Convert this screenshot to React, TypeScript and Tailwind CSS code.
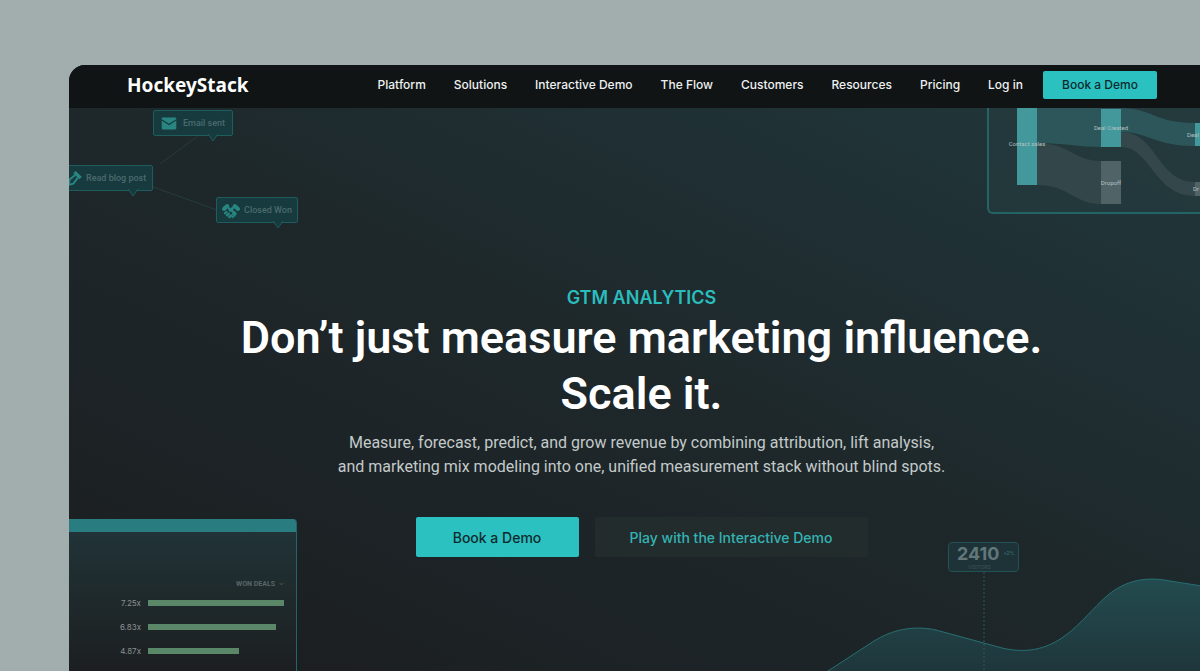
const navLinks = [
  'Platform',
  'Solutions',
  'Interactive Demo',
  'The Flow',
  'Customers',
  'Resources',
  'Pricing',
  'Log in',
];

const wonDeals = [
  { label: '7.25x', value: 100 },
  { label: '6.83x', value: 94 },
  { label: '4.87x', value: 67 },
];

function MailIcon() {
  return (
    <svg viewBox="0 0 15 13" className="w-4 h-[13px]" fill="currentColor">
      <path d="M1.4 0.5h12.2c.7 0 1.2.5 1.2 1.1v.6L7.5 6.8 .2 2.2v-.6C.2 1 .7.5 1.4.5z" />
      <path d="M.2 3.6 7.5 8.3l7.3-4.7v7.7c0 .7-.5 1.2-1.2 1.2H1.4c-.7 0-1.2-.5-1.2-1.2z" />
    </svg>
  );
}

function PenIcon() {
  return (
    <svg viewBox="0 0 14 16" className="w-[14px] h-4" fill="none" stroke="currentColor" strokeLinejoin="round">
      <path d="M6.4 1.2 12.6 7" strokeWidth="3.4" />
      <path d="M7.2 4 1.6 8.6 1 13.8 5.4 12.6 9.8 6.6" strokeWidth="1.9" />
    </svg>
  );
}

function HandshakeIcon() {
  return (
    <svg viewBox="0 0 18 16" className="w-[18px] h-4" fill="none" stroke="currentColor" strokeLinecap="round">
      <path d="M2 6 5.2 3M16 6 12.8 3" strokeWidth="4" />
      <path d="M7 5.4 13.4 10.6" strokeWidth="2.6" />
      <path d="M11.4 4.6 8 7.4" strokeWidth="2.6" />
      <path d="M3 10.4 4.6 9M5 12.4 6.8 10.6M7.2 14.2 9 12.4" strokeWidth="2.2" />
      <path d="M10.6 14 10.2 13.6M12.6 12.6 11 11" strokeWidth="2.2" />
    </svg>
  );
}

function TagPointer() {
  return (
    <svg viewBox="0 0 10 8" className="absolute top-full right-[14px] w-[10px] h-2 -mt-px">
      <path d="M0 0 5 7 10 0" fill="#173a3e" stroke="#1f5c5e" strokeWidth="1" />
    </svg>
  );
}

/* Customer journey tags behind the headline, top left */
function JourneyTags() {
  const tag =
    'absolute flex items-center h-[26px] pt-px rounded-xs border border-[#1f5c5e] bg-[#173a3e] text-[#4b6a6d] font-[Roboto,sans-serif] text-[9px] font-medium whitespace-nowrap';
  return (
    <div className="absolute left-0 top-0 w-60 h-32" aria-hidden="true">
      <svg viewBox="0 0 240 128" className="absolute inset-0 w-60 h-32" fill="none" stroke="#263b3e">
        <path d="M91 56 129 28M84 79 148 102" />
      </svg>
      <div className={`${tag} left-[84px] top-[2px] w-20 pl-[7px] gap-[6px]`}>
        <span className="text-[#288581]">
          <MailIcon />
        </span>
        Email sent
        <TagPointer />
      </div>
      <div className={`${tag} -left-2 top-[57px] w-[92px] pl-[6px] gap-1`}>
        <span className="text-[#288581]">
          <PenIcon />
        </span>
        Read blog post
        <TagPointer />
      </div>
      <div className={`${tag} left-[147px] top-[89px] w-[82px] pl-[5px] gap-1`}>
        <span className="text-[#288581]">
          <HandshakeIcon />
        </span>
        Closed Won
        <TagPointer />
      </div>
    </div>
  );
}

function SankeyCard() {
  return (
    <div
      className="absolute right-0 top-0 w-[213px] h-[106px] border-l-2 border-b-2 border-[#236467] rounded-bl-md bg-[#263c3f]/60 overflow-hidden"
      aria-hidden="true"
    >
      <svg viewBox="0 0 211 104" className="w-[211px] h-[104px]" fontFamily="Roboto, sans-serif">
        <path d="M48 0H132C162 0 166 15 206 15V38C165 38 160 24 132 24V39H112C90 39 75 35 48 35z" fill="#2c5659" />
        <path d="M48 35C80 35 85 53 112 53V96C85 96 80 77 48 77z" fill="#33474a" />
        <path d="M132 24C168 24 168 74 206 74V88C165 88 162 39 132 39z" fill="#34484b" />
        <rect x="28" width="20" height="77" fill="#42989a" />
        <rect x="112" y="1" width="20" height="38" fill="#42989a" />
        <rect x="112" y="53" width="20" height="43" fill="#506467" />
        <rect x="206" y="15" width="5" height="23" fill="#42989a" />
        <rect x="206" y="74" width="5" height="14" fill="#506467" />
        <g fill="#b4c2c3" fontSize="6" textAnchor="middle">
          <text x="38" y="38">Contact sales</text>
          <text x="122" y="22">Deal Created</text>
          <text x="122" y="77">Dropoff</text>
        </g>
        <g fill="#b4c2c3" fontSize="6">
          <text x="198" y="29">Deal</text>
          <text x="204" y="83">Dr</text>
        </g>
      </svg>
    </div>
  );
}

function WonDealsCard() {
  return (
    <div
      className="absolute left-0 bottom-0 w-[228px] h-[152px] border-r border-[#236467] rounded-tr-sm overflow-hidden bg-linear-to-b from-[#21353a] via-[#1f2a2c] to-[#1c1f22]"
      aria-hidden="true"
    >
      <div className="h-[13px] bg-[#297c80]" />
      <div className="flex items-center justify-end gap-1 mt-[46px] mr-3 h-3 font-[Roboto,sans-serif] text-[7px] font-bold text-[#5b6668]">
        WON DEALS
        <svg viewBox="0 0 6 4" className="w-[5px] h-1" fill="none" stroke="currentColor">
          <path d="M1 1 3 3 5 1" />
        </svg>
      </div>
      <div className="mt-px pl-[50px] pr-3">
        {wonDeals.map((deal) => (
          <div key={deal.label} className="flex items-center gap-[7px] h-6 text-[8px] text-[#8a9193]">
            <span className="w-[22px] text-right">{deal.label}</span>
            <div className="flex-1">
              <div className="h-[6px] bg-[#598768]" style={{ width: `${deal.value}%` }} />
            </div>
          </div>
        ))}
      </div>
    </div>
  );
}

function VisitorsChart() {
  return (
    <div className="absolute right-0 bottom-0 w-[400px] h-[136px]" aria-hidden="true">
      <svg viewBox="0 0 400 136" className="absolute inset-0 w-[400px] h-[136px]">
        <defs>
          <linearGradient id="area" x1="0" y1="0" x2="0" y2="1">
            <stop offset="0" stopColor="#234b4f" />
            <stop offset="1" stopColor="#1e3439" />
          </linearGradient>
        </defs>
        <path
          d="M14 146 28 136 74 106C92 95 112 90 136 95L202 113C224 118 245 116 266 100C282 88 292 74 308 60C325 46 345 41 370 46L402 51V146z"
          fill="url(#area)"
          stroke="#286f72"
        />
        <path d="M184 37V136" stroke="#31575a" strokeDasharray="2 2" />
      </svg>
      <div className="absolute left-[148px] top-[7px] w-[71px] h-[30px] rounded-sm border border-[#235154] bg-[#1d3337] text-[#61777a]">
        <div className="flex items-center pl-2 gap-1 h-[22px]">
          <span className="text-lg font-bold">2410</span>
          <span className="text-[5px] text-[#3c7375]">+2%</span>
        </div>
        <div className="pl-[19px] text-[5px] leading-none text-[#3f5659]">VISITORS</div>
      </div>
    </div>
  );
}

function Header() {
  return (
    <header className="relative z-10 flex items-center justify-between h-[43px] pb-1 pl-[58px] pr-[57px] bg-[#101415]">
      <a href="#" className="font-['Noto_Sans',sans-serif] font-bold text-[19px] leading-6 text-white">
        HockeyStack
      </a>
      <nav className="flex items-center gap-7 text-[12px] font-medium text-[#eef1f1] whitespace-nowrap">
        {navLinks.map((link) => (
          <a key={link} href="#">
            {link}
          </a>
        ))}
        <a
          href="#"
          className="-ml-2 flex items-center justify-center w-[114px] h-7 rounded-xs bg-[#2bc1c1] text-[#0d2b2d]"
        >
          Book a Demo
        </a>
      </nav>
    </header>
  );
}

export default function App() {
  return (
    <div className="flex flex-col min-h-screen pt-[65px] pl-[69px] bg-[#a2adad] overflow-hidden font-['Inter',sans-serif]">
      <div className="relative flex flex-col flex-1 -mr-[14px] rounded-tl-2xl overflow-hidden bg-linear-[25deg] from-[#1b1d20] via-[#1e282b] to-[#21393d]">
        <Header />

        <main className="relative flex-1">
          <div className="absolute inset-y-0 left-0 right-[14px]">
            <JourneyTags />
            <SankeyCard />
            <WonDealsCard />
            <VisitorsChart />
          </div>

          {/* Hero */}
          <section className="relative flex flex-col items-center pt-[178px] text-center">
            <p className="text-[18px] leading-6 font-semibold text-[#2bbcbc]">GTM ANALYTICS</p>
            <h1 className="font-[Roboto,sans-serif] text-[45px] leading-14 font-semibold text-white">
              Don’t just measure marketing influence.
              <br />
              Scale it.
            </h1>
            <p className="mt-[9px] font-[Roboto,sans-serif] text-[16px] leading-6 text-[#c3caca]">
              Measure, forecast, predict, and grow revenue by combining attribution, lift analysis,
              <br />
              and marketing mix modeling into one, unified measurement stack without blind spots.
            </p>
            <div className="flex gap-4 mt-[38px] text-[14px] font-medium">
              <button className="w-[163px] h-10 rounded-xs bg-[#2bc1c1] text-[#0d2b2d]">Book a Demo</button>
              <button className="w-[273px] h-10 rounded-xs bg-[#232c2d] text-[#33b3b3]">
                Play with the Interactive Demo
              </button>
            </div>
          </section>
        </main>
      </div>
    </div>
  );
}
